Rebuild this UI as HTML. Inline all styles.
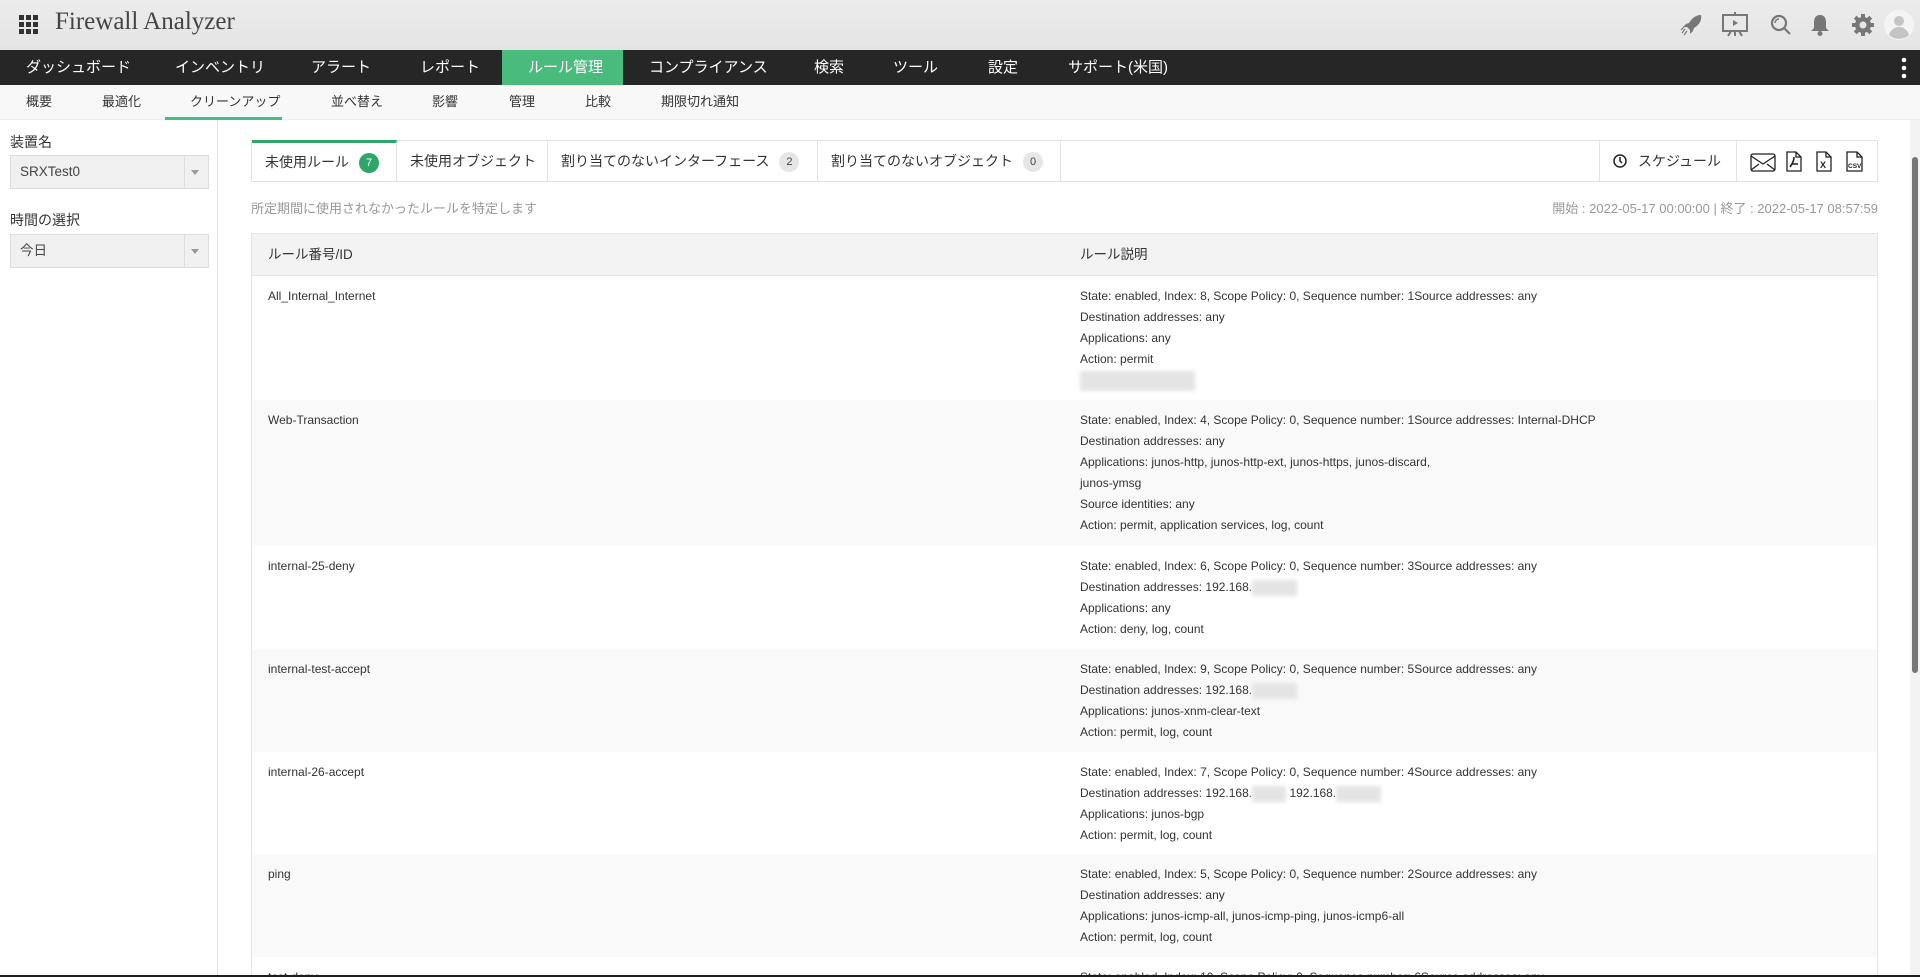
<!DOCTYPE html>
<html style="width:1920px;height:977px;overflow:hidden"><head><meta charset="utf-8">
<style>
*{box-sizing:border-box;margin:0;padding:0}
body{width:1920px;height:977px;overflow:hidden;background:#fff;font-family:"Liberation Sans","Noto Sans CJK JP",sans-serif;color:#333;position:relative}
.abs{position:absolute}
#hdr{left:0;top:0;width:1920px;height:50px;background:linear-gradient(#ececec,#e4e4e4)}
#title{left:55px;top:8px;font-family:"Liberation Serif","Noto Serif CJK SC",serif;font-size:25px;color:#444}
#nav{left:0;top:50px;width:1920px;height:35px;background:#262626}
#nav span{position:absolute;top:0;line-height:35px;color:#fff;font-size:15px}
#act{left:502px;top:0;width:121px;height:35px;background:#49bb7d}
#sub{left:0;top:85px;width:1920px;height:35px;background:#f8f8f8;border-bottom:1px solid #eee}
#sub span{position:absolute;top:0;line-height:33px;font-size:13px;color:#333}
#side{left:0;top:120px;width:218px;height:857px;border-right:1px solid #e6e6e6}
.lbl{font-size:14px;color:#333}
.sel{left:10px;width:199px;height:34px;border:1px solid #ddd;background:#f0f0f0;font-size:13.5px;line-height:32px;padding-left:9px;color:#444}
.sel:after{content:"";position:absolute;left:173px;top:0;width:1px;height:32px;background:#ddd}
.sel i{position:absolute;right:9px;top:14px;border:4px solid transparent;border-top:5px solid #999}
#tabs{left:251px;top:140px;width:1627px;height:42px;border:1px solid #e2e2e2}
.tab{position:absolute;top:0;height:40px;border-right:1px solid #e2e2e2;font-size:14px;line-height:40px;padding-left:13px;color:#333}
.bd{display:inline-block;width:20px;height:20px;border-radius:10px;background:#e6e6e6;font-size:11px;line-height:20px;text-align:center;margin-left:10px;color:#444;vertical-align:1px}
.bd.g{background:#2ea66a;color:#fff}
#wrap{left:251px;top:233px;width:1627px;height:742px;overflow:hidden}
#tbl{width:1627px;border:1px solid #e4e4e4;border-bottom:none}
.hd{height:42px;background:#f3f3f4;border-bottom:1px solid #e4e4e4;font-size:13.5px;line-height:42px;position:relative}
.row{position:relative;font-size:12px;line-height:21px;padding:10px 0;color:#333}
.row .c1{position:absolute;left:16px;top:10px}
.row .c2{margin-left:828px}
.row.s{background:#f9f9f9}
.blur{display:inline-block;background:#e4e4e4;filter:blur(2px);vertical-align:middle}
</style></head><body>
<div id="hdr" class="abs">
<svg class="abs" style="left:19px;top:15px" width="20" height="20" viewBox="0 0 20 20" fill="#333"><rect x="0" y="0" width="5" height="5"/><rect x="7" y="0" width="5" height="5"/><rect x="14" y="0" width="5" height="5"/><rect x="0" y="7" width="5" height="5"/><rect x="7" y="7" width="5" height="5"/><rect x="14" y="7" width="5" height="5"/><rect x="0" y="14" width="5" height="5"/><rect x="7" y="14" width="5" height="5"/><rect x="14" y="14" width="5" height="5"/></svg>
<div id="title" class="abs">Firewall Analyzer</div>
<svg class="abs" style="left:1680px;top:13px" width="24" height="24" viewBox="0 0 24 24" fill="#777"><path d="M21 2c-5 0-9 3-12 8l-3 1-3 3 4 0 3 3 0 4 3-3 1-3c5-3 8-7 7-13zM15 7a2 2 0 1 0 .1 0z"/><path d="M5 16l-3 4M7 18l-3 4M4 14l-3 3" stroke="#777" stroke-width="1.2"/></svg>
<svg class="abs" style="left:1721px;top:11px" width="28" height="28" viewBox="0 0 28 28" fill="none" stroke="#777" stroke-width="2"><rect x="2" y="4" width="24" height="16"/><path d="M14 1v3M10 20l-3 5M18 20l3 5M14 20v5"/><path d="M12 9l5 3-5 3z" fill="#777" stroke="none"/></svg>
<svg class="abs" style="left:1769px;top:13px" width="24" height="24" viewBox="0 0 24 24" fill="none" stroke="#777" stroke-width="2.2"><circle cx="10" cy="10" r="7"/><path d="M15 15l6 6"/><path d="M6 10a4 4 0 0 1 4-4" stroke-width="1.5"/></svg>
<svg class="abs" style="left:1810px;top:13px" width="20" height="24" viewBox="0 0 20 24" fill="#777"><path d="M10 2c4 0 6 3 6 7v6l3 3H1l3-3V9c0-4 2-7 6-7z"/><circle cx="10" cy="20.5" r="2.5"/></svg>
<svg class="abs" style="left:1851px;top:13px" width="24" height="24" viewBox="0 0 24 24"><g fill="#777"><circle cx="12" cy="12" r="8"/><rect x="10" y="1" width="4" height="22"/><rect x="1" y="10" width="22" height="4"/><rect x="10" y="1" width="4" height="22" transform="rotate(45 12 12)"/><rect x="10" y="1" width="4" height="22" transform="rotate(-45 12 12)"/></g><circle cx="12" cy="12" r="3.5" fill="#e6e6e6"/></svg>
<svg class="abs" style="left:1884px;top:10px" width="30" height="30" viewBox="0 0 30 30"><circle cx="15" cy="15" r="15" fill="#f4f4f4"/><circle cx="15" cy="11" r="5" fill="#c4c4c4"/><path d="M5 25c2-6 6-8 10-8s8 2 10 8a15 15 0 0 1-20 0z" fill="#c4c4c4"/></svg>
</div>
<div id="nav" class="abs">
<div id="act" class="abs"></div>
<span style="left:26px">ダッシュボード</span><span style="left:175px">インベントリ</span><span style="left:311px">アラート</span><span style="left:420px">レポート</span><span style="left:528px">ルール管理</span><span style="left:649px">コンプライアンス</span><span style="left:814px">検索</span><span style="left:893px">ツール</span><span style="left:988px">設定</span><span style="left:1068px">サポート(米国)</span>
<svg class="abs" style="left:1901px;top:7px" width="6" height="22"><circle cx="3" cy="3" r="2.3" fill="#fff"/><circle cx="3" cy="11" r="2.3" fill="#fff"/><circle cx="3" cy="19" r="2.3" fill="#fff"/></svg>
</div>
<div id="sub" class="abs">
<span style="left:26px">概要</span><span style="left:102px">最適化</span><span style="left:190px">クリーンアップ</span><span style="left:331px">並べ替え</span><span style="left:432px">影響</span><span style="left:509px">管理</span><span style="left:585px">比較</span><span style="left:661px">期限切れ通知</span>
<div class="abs" style="left:165px;top:32px;width:117px;height:3px;background:#49bb7d"></div>
</div>
<div id="side" class="abs">
<div class="abs lbl" style="left:10px;top:12px">装置名</div>
<div class="abs sel" style="top:35px">SRXTest0<i></i></div>
<div class="abs lbl" style="left:10px;top:90px">時間の選択</div>
<div class="abs sel" style="top:114px">今日<i></i></div>
</div>
<div id="tabs" class="abs">
<div class="tab" style="left:0;width:145px;border-top:3px solid #2ea66a;top:-1px;height:41px;line-height:38px">未使用ルール<span class="bd g">7</span></div>
<div class="tab" style="left:145px;width:151px">未使用オブジェクト</div>
<div class="tab" style="left:296px;width:270px">割り当てのないインターフェース<span class="bd">2</span></div>
<div class="tab" style="left:566px;width:243px">割り当てのないオブジェクト<span class="bd">0</span></div>
<div class="tab" style="left:1347px;width:138px;border-left:1px solid #e2e2e2;padding-left:21px">
<svg style="position:absolute;left:13px;top:13px" width="14" height="14" viewBox="0 0 14 14" fill="none" stroke="#222" stroke-width="1.5"><circle cx="7" cy="7" r="6"/><path d="M7 3v4l2 2"/></svg><span style="margin-left:17px">スケジュール</span></div>
<svg class="abs" style="left:1498px;top:12px" width="26" height="19" viewBox="0 0 26 19" fill="none" stroke="#222" stroke-width="1.3"><rect x="1" y="1" width="24" height="17" rx="2"/><path d="M1 3l12 8 12-8M1 17l8-6M25 17l-8-6"/></svg>
<svg class="abs" style="left:1534px;top:10px" width="16" height="21" viewBox="0 0 16 21" fill="none" stroke="#222" stroke-width="1.3"><path d="M1 1h9l5 5v14H1z M10 1v5h5"/><path d="M4 16c2-3 4-6 4-10M6 13h6" stroke-width="1.6"/></svg>
<svg class="abs" style="left:1564px;top:10px" width="16" height="21" viewBox="0 0 16 21" fill="none" stroke="#222" stroke-width="1.3"><path d="M1 1h9l5 5v14H1z M10 1v5h5"/><text x="4" y="17" font-size="9" font-weight="bold" fill="#222" stroke="none" font-family="Liberation Sans">X</text></svg>
<svg class="abs" style="left:1594px;top:10px" width="18" height="21" viewBox="0 0 18 21" fill="none" stroke="#222" stroke-width="1.3"><path d="M1 1h10l5 5v14H1z M11 1v5h5"/><text x="2" y="17" font-size="6.5" font-weight="bold" fill="#222" stroke="none" font-family="Liberation Sans">CSV</text></svg>
</div>
<div class="abs" style="left:251px;top:198px;font-size:13px;color:#999">所定期間に使用されなかったルールを特定します</div>
<div class="abs" style="right:42px;top:198px;font-size:13px;color:#999">開始 : 2022-05-17 00:00:00 | 終了 : 2022-05-17 08:57:59</div>
<div id="wrap" class="abs"><div id="tbl">
<div class="hd"><span style="position:absolute;left:16px">ルール番号/ID</span><span style="position:absolute;left:828px">ルール説明</span></div>
<div class="row" style="height:124px"><div class="c1">All_Internal_Internet</div><div class="c2">State: enabled, Index: 8, Scope Policy: 0, Sequence number: 1Source addresses: any<br>Destination addresses: any<br>Applications: any<br>Action: permit<br><span class="blur" style="width:115px;height:20px"></span></div></div>
<div class="row s" style="height:146px"><div class="c1">Web-Transaction</div><div class="c2">State: enabled, Index: 4, Scope Policy: 0, Sequence number: 1Source addresses: Internal-DHCP<br>Destination addresses: any<br>Applications: junos-http, junos-http-ext, junos-https, junos-discard,<br>junos-ymsg<br>Source identities: any<br>Action: permit, application services, log, count</div></div>
<div class="row" style="height:103px"><div class="c1">internal-25-deny</div><div class="c2">State: enabled, Index: 6, Scope Policy: 0, Sequence number: 3Source addresses: any<br>Destination addresses: 192.168.<span class="blur" style="width:45px;height:16px"></span><br>Applications: any<br>Action: deny, log, count</div></div>
<div class="row s" style="height:103px"><div class="c1">internal-test-accept</div><div class="c2">State: enabled, Index: 9, Scope Policy: 0, Sequence number: 5Source addresses: any<br>Destination addresses: 192.168.<span class="blur" style="width:45px;height:16px"></span><br>Applications: junos-xnm-clear-text<br>Action: permit, log, count</div></div>
<div class="row" style="height:102px"><div class="c1">internal-26-accept</div><div class="c2">State: enabled, Index: 7, Scope Policy: 0, Sequence number: 4Source addresses: any<br>Destination addresses: 192.168.<span class="blur" style="width:34px;height:16px"></span> 192.168.<span class="blur" style="width:45px;height:16px"></span><br>Applications: junos-bgp<br>Action: permit, log, count</div></div>
<div class="row s" style="height:103px"><div class="c1">ping</div><div class="c2">State: enabled, Index: 5, Scope Policy: 0, Sequence number: 2Source addresses: any<br>Destination addresses: any<br>Applications: junos-icmp-all, junos-icmp-ping, junos-icmp6-all<br>Action: permit, log, count</div></div>
<div class="row" style="height:60px"><div class="c1">test-deny</div><div class="c2">State: enabled, Index: 10, Scope Policy: 0, Sequence number: 6Source addresses: any</div></div>
</div></div>
<div class="abs" style="left:1910px;top:120px;width:10px;height:855px;background:#f3f3f3"></div>
<div class="abs" style="left:1912px;top:157px;width:6px;height:516px;background:#777;border-radius:3px"></div>
<div class="abs" style="left:0;top:975px;width:1920px;height:2px;background:#1e1e1e"></div>
</body></html>
